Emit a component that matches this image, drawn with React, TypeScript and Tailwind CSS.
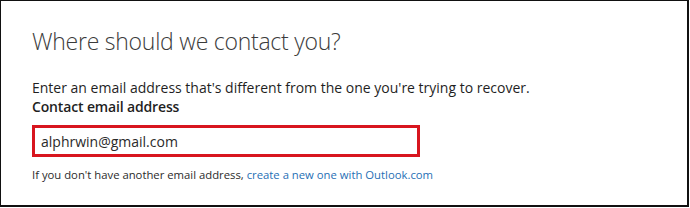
export default function App() {
  return (
    <div className="w-[690px] h-[208px] bg-white">
      <div
        className="w-[689px] h-[207px] border-l border-t border-r-2 border-b-2 border-[#111] pl-[31px] pt-[24px] text-[#222]"
        style={{ fontFamily: '"Segoe UI", "Open Sans", "Noto Sans", sans-serif' }}
      >
        {/* Title */}
        <h1 className="text-[23px] font-light leading-[32px] text-[#3b3b3b] tracking-[-0.25px]">
          Where should we contact you?
        </h1>

        {/* Description */}
        <p className="mt-[22px] text-[14px] leading-[18px] text-[#1f1f1f]">
          Enter an email address that's different from the one you're trying to recover.
        </p>
        <p className="text-[14px] leading-[20px] font-semibold text-[#1f1f1f] tracking-[-0.15px]">
          Contact email address
        </p>

        {/* Input */}
        <div className="mt-[8px] w-[388px] h-[32px] border-[3px] border-[#d8161f] flex items-center pl-[6px] text-[14px] text-[#2a2a2a]">
          alphrwin@gmail.com
        </div>

        {/* Footer */}
        <p className="mt-[11px] text-[11.3px] leading-[14px] text-[#2b2b2b]">
          If you don't have another email address,{" "}
          <a className="text-[#1f6fb5]">create a new one with Outlook.com</a>
        </p>
      </div>
    </div>
  );
}
